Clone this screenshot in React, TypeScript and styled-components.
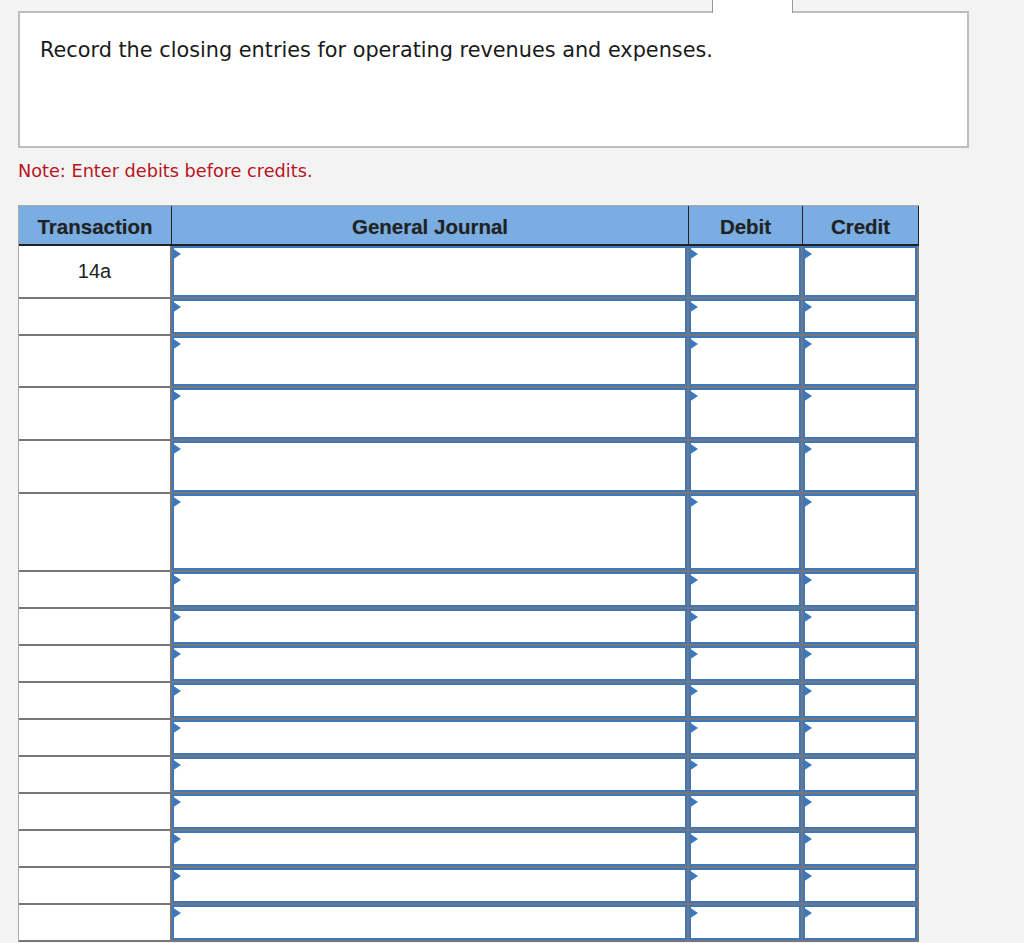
import React from "react";
import styled, { createGlobalStyle } from "styled-components";

const GlobalStyle = createGlobalStyle`
	html, body {
		margin: 0;
		padding: 0;
		background: #f3f3f3;
	}
	* {
		box-sizing: border-box;
	}
`;

const Page = styled.div`
	padding: 0 0 0 18px;
	width: 1024px;
	height: 943px;
	overflow: hidden;
`;

const TabStrip = styled.div`
	display: flex;
	padding-left: 694px;
	height: 11px;
`;

const Tab = styled.div`
	position: relative;
	z-index: 1;
	width: 81px;
	height: 13px;
	margin-bottom: -2px;
	background: #fff;
	border-left: 1px solid #9a9a9a;
	border-right: 1px solid #9a9a9a;
`;

const QuestionCard = styled.div`
	width: 951px;
	height: 137px;
	background: #fff;
	border: 2px solid #bdbdbd;
	padding: 25px 20px;
	font-family: "DejaVu Sans", Verdana, sans-serif;
	font-size: 20.8px;
	line-height: 24px;
	color: #1a1a1a;
`;

const Note = styled.p`
	margin: 12px 0 0;
	font-family: "DejaVu Sans", Verdana, sans-serif;
	font-size: 17.7px;
	line-height: 22px;
	color: #b8141d;
`;

const Journal = styled.table`
	margin-top: 23px;
	width: 900px;
	table-layout: fixed;
	border-collapse: separate;
	border-spacing: 0;
	border-top: 1px solid #a9a9a9;
	border-left: 1px solid #a9a9a9;
	font-family: "Liberation Sans", Arial, sans-serif;
`;

const HeadCell = styled.th`
	height: 40px;
	padding: 3px 0 0;
	background: #7aaee3;
	border-right: 1px solid #222;
	border-bottom: 2px solid #222;
	font-size: 20.5px;
	font-weight: bold;
	color: #222;
	text-align: center;
	vertical-align: middle;
	text-shadow: 0 0 1px rgba(0, 0, 0, 0.25);
`;

const TxCell = styled.td<{ $h: number }>`
	height: ${({ $h }) => $h}px;
	padding: 0;
	background: #fff;
	border-right: 2px solid #777;
	border-bottom: 2px solid #777;
	font-size: 20px;
	color: #222;
	text-align: center;
	vertical-align: middle;
`;

const EntryCell = styled.td<{ $h: number }>`
	height: ${({ $h }) => $h}px;
	padding: 0;
	border-right: 2px solid #777;
	border-bottom: 2px solid #777;
	vertical-align: top;
`;

const EntryBox = styled.div<{ $h: number }>`
	position: relative;
	height: ${({ $h }) => $h - 2}px;
	background: #fff;
	border: 2px solid #3d78be;

	&::before {
		content: "";
		position: absolute;
		left: -2px;
		top: 0;
		border-top: 6px solid transparent;
		border-bottom: 6px solid transparent;
		border-left: 9px solid #3d78be;
	}
`;

const columns = [
	{ label: "Transaction", width: 153 },
	{ label: "General Journal", width: 517 },
	{ label: "Debit", width: 114 },
	{ label: "Credit", width: 116 },
];

const rows = [
	{ tx: "14a", h: 53 },
	{ tx: "", h: 37 },
	{ tx: "", h: 52 },
	{ tx: "", h: 53 },
	{ tx: "", h: 53 },
	{ tx: "", h: 78 },
	...Array.from({ length: 10 }, () => ({ tx: "", h: 37 })),
];

const App: React.FC = () => {
	return (
		<Page>
			<GlobalStyle />
			<TabStrip>
				<Tab />
			</TabStrip>
			<QuestionCard>
				Record the closing entries for operating revenues and expenses.
			</QuestionCard>
			<Note>Note: Enter debits before credits.</Note>
			<Journal>
				<colgroup>
					{columns.map((col) => (
						<col key={col.label} style={{ width: col.width }} />
					))}
				</colgroup>
				<thead>
					<tr>
						{columns.map((col) => (
							<HeadCell key={col.label}>{col.label}</HeadCell>
						))}
					</tr>
				</thead>
				<tbody>
					{rows.map((row, i) => (
						<tr key={i}>
							<TxCell $h={row.h}>{row.tx}</TxCell>
							<EntryCell $h={row.h}>
								<EntryBox $h={row.h} />
							</EntryCell>
							<EntryCell $h={row.h}>
								<EntryBox $h={row.h} />
							</EntryCell>
							<EntryCell $h={row.h}>
								<EntryBox $h={row.h} />
							</EntryCell>
						</tr>
					))}
				</tbody>
			</Journal>
		</Page>
	);
};

export default App;
